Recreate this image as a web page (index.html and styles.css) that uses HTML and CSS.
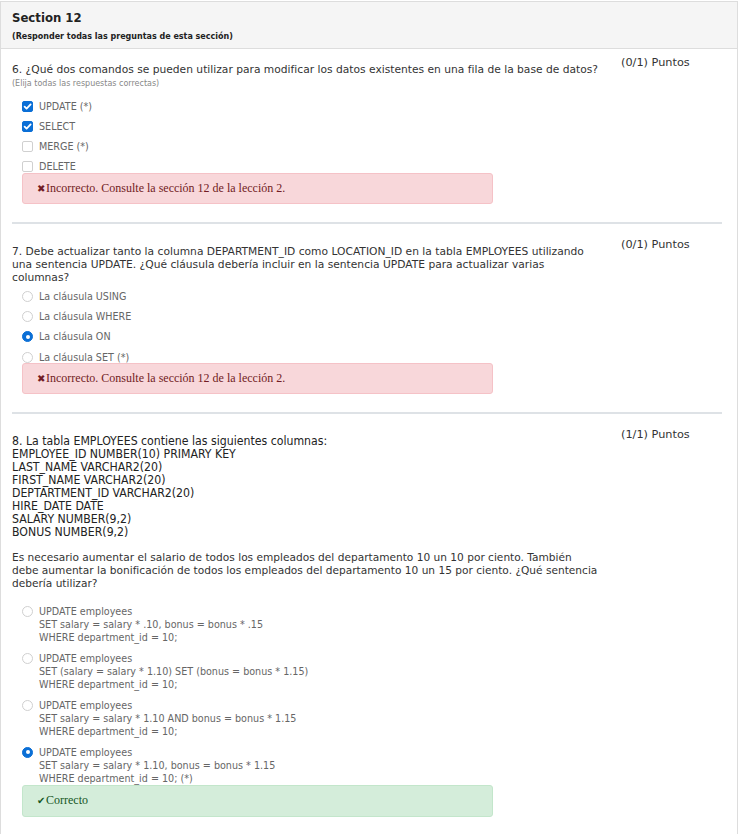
FILE: index.html
```html
<!DOCTYPE html>
<html lang="es">
<head>
<meta charset="utf-8">
<title>Section 12</title>
<link rel="stylesheet" href="styles.css">
</head>
<body>
<div class="panel">
  <div class="panel-head">
    <div class="title">Section 12</div>
    <div class="subtitle">(Responder todas las preguntas de esta sección)</div>
  </div>
  <div class="panel-body">

    <div class="q q-first">
      <div class="q-main">
        <div class="q-text">6. ¿Qué dos comandos se pueden utilizar para modificar los datos existentes en una fila de la base de datos?</div>
        <div class="hint">(Elija todas las respuestas correctas)</div>
        <div class="opts opts-check">
          <div class="opt"><span class="box on"><svg viewBox="0 0 11 11" width="11" height="11"><path d="M2.6 5.6 L4.6 7.6 L8.6 3.4" fill="none" stroke="#fff" stroke-width="1.8" stroke-linecap="round" stroke-linejoin="round"/></svg></span><span class="opt-text">UPDATE (*)</span></div>
          <div class="opt"><span class="box on"><svg viewBox="0 0 11 11" width="11" height="11"><path d="M2.6 5.6 L4.6 7.6 L8.6 3.4" fill="none" stroke="#fff" stroke-width="1.8" stroke-linecap="round" stroke-linejoin="round"/></svg></span><span class="opt-text">SELECT</span></div>
          <div class="opt"><span class="box"></span><span class="opt-text">MERGE (*)</span></div>
          <div class="opt"><span class="box"></span><span class="opt-text">DELETE</span></div>
        </div>
        <div class="fb fb-bad"><span class="fb-icon">✖</span>Incorrecto. Consulte la sección 12 de la lección 2.</div>
      </div>
      <div class="points">(0/1) Puntos</div>
    </div>

    <div class="q">
      <div class="q-main">
        <div class="q-text">7. Debe actualizar tanto la columna DEPARTMENT_ID como LOCATION_ID en la tabla EMPLOYEES utilizando una sentencia UPDATE. ¿Qué cláusula debería incluir en la sentencia UPDATE para actualizar varias columnas?</div>
        <div class="opts opts-radio">
          <div class="opt"><span class="radio"></span><span class="opt-text">La cláusula USING</span></div>
          <div class="opt"><span class="radio"></span><span class="opt-text">La cláusula WHERE</span></div>
          <div class="opt"><span class="radio on"></span><span class="opt-text">La cláusula ON</span></div>
          <div class="opt"><span class="radio"></span><span class="opt-text">La cláusula SET (*)</span></div>
        </div>
        <div class="fb fb-bad"><span class="fb-icon">✖</span>Incorrecto. Consulte la sección 12 de la lección 2.</div>
      </div>
      <div class="points">(0/1) Puntos</div>
    </div>

    <div class="q q-last">
      <div class="q-main">
        <div class="q-text">
          <div class="cols">8. La tabla EMPLOYEES contiene las siguientes columnas:<br>EMPLOYEE_ID NUMBER(10) PRIMARY KEY<br>LAST_NAME VARCHAR2(20)<br>FIRST_NAME VARCHAR2(20)<br>DEPTARTMENT_ID VARCHAR2(20)<br>HIRE_DATE DATE<br>SALARY NUMBER(9,2)<br>BONUS NUMBER(9,2)</div>
          <p class="para">Es necesario aumentar el salario de todos los empleados del departamento 10 un 10 por ciento. También debe aumentar la bonificación de todos los empleados del departamento 10 un 15 por ciento. ¿Qué sentencia debería utilizar?</p>
        </div>
        <div class="opts opts-radio opts-multi">
          <div class="opt"><span class="radio"></span><span class="opt-text">UPDATE employees<br>SET salary = salary * .10, bonus = bonus * .15<br>WHERE department_id = 10;</span></div>
          <div class="opt"><span class="radio"></span><span class="opt-text">UPDATE employees<br>SET (salary = salary * 1.10) SET (bonus = bonus * 1.15)<br>WHERE department_id = 10;</span></div>
          <div class="opt"><span class="radio"></span><span class="opt-text">UPDATE employees<br>SET salary = salary * 1.10 AND bonus = bonus * 1.15<br>WHERE department_id = 10;</span></div>
          <div class="opt"><span class="radio on"></span><span class="opt-text">UPDATE employees<br>SET salary = salary * 1.10, bonus = bonus * 1.15<br>WHERE department_id = 10; (*)</span></div>
        </div>
        <div class="fb fb-good"><span class="fb-icon">✔</span>Correcto</div>
      </div>
      <div class="points">(1/1) Puntos</div>
    </div>

  </div>
</div>
</body>
</html>
```
FILE: styles.css
```css
* { box-sizing: border-box; }

body {
  margin: 0;
  background: #fff;
  font-family: "DejaVu Sans", Verdana, sans-serif;
  color: #333;
}

.panel {
  width: 738px;
  margin-top: 1px;
  border: 1px solid #dddddd;
  border-bottom: none;
  min-height: 833px;
}

.panel-head {
  height: 47px;
  background: #f5f5f5;
  border-bottom: 1px solid #dddddd;
  padding: 7px 11px 0;
}

.title {
  font-family: "DejaVu Sans Condensed", "DejaVu Sans", sans-serif;
  font-weight: bold;
  font-size: 13px;
  line-height: 18px;
  color: #222;
}

.subtitle {
  margin-top: 5px;
  font-weight: bold;
  font-size: 8px;
  line-height: 10px;
  color: #222;
}

.panel-body {
  padding: 0 15px 0 11px;
}

.q {
  display: grid;
  grid-template-columns: 589px 101px;
  column-gap: 20px;
  padding: 14px 0 18px;
  border-bottom: 2px solid #dee2e6;
}

.q-first { padding-top: 7px; }
.q-last { border-bottom: none; }

.q-text {
  padding-top: 7px;
  font-size: 10.7px;
  line-height: 13px;
  color: #333;
}

.points {
  font-size: 11.3px;
  line-height: 13px;
  color: #333;
}

.hint {
  font-size: 8px;
  line-height: 15px;
  color: #888;
}

.opts {
  display: flex;
  flex-direction: column;
  padding-left: 10px;
  margin-top: 5px;
}

.opts-radio { margin-top: 2px; }
.opts-multi { margin-top: 11px; }

.opt {
  display: flex;
  align-items: flex-start;
  padding: 3.5px 0;
  font-size: 9.6px;
  line-height: 13.3px;
  color: #666;
}

.opt-text { margin-left: 6px; }

.box, .radio {
  flex: none;
  width: 11px;
  height: 11px;
  margin-top: 1px;
  border: 1px solid #d0d0d0;
  background: #fff;
}

.box { border-radius: 2px; }
.box svg { display: block; margin: -1px; }
.box.on { background: #0b6fd6; border-color: #0b6fd6; }

.radio { border-radius: 50%; position: relative; }
.radio.on { background: #0b6fd6; border-color: #0b6fd6; }
.radio.on::after {
  content: "";
  position: absolute;
  left: 2.5px;
  top: 2.5px;
  width: 4px;
  height: 4px;
  border-radius: 50%;
  background: #fff;
}

.cols {
  font-family: "DejaVu Sans Condensed", "DejaVu Sans", sans-serif;
  font-size: 12.2px;
  line-height: 13px;
  color: #222;
}

.para {
  margin: 12px 0 0;
  font-size: 10.6px;
}

.fb {
  width: 471px;
  height: 31px;
  margin: -4px 0 0 10px;
  padding: 0 14px;
  display: flex;
  align-items: center;
  border: 1px solid;
  border-radius: 3px;
  font-family: "Liberation Serif", "Times New Roman", serif;
  font-size: 12px;
}

.fb-bad {
  background: #f8d7da;
  border-color: #f5c2c7;
  color: #721c24;
}

.fb-good {
  background: #d4edda;
  border-color: #c3e6cb;
  color: #155724;
  height: 32px;
}

.fb-icon { font-size: 10px; margin-right: 1px; }
```
